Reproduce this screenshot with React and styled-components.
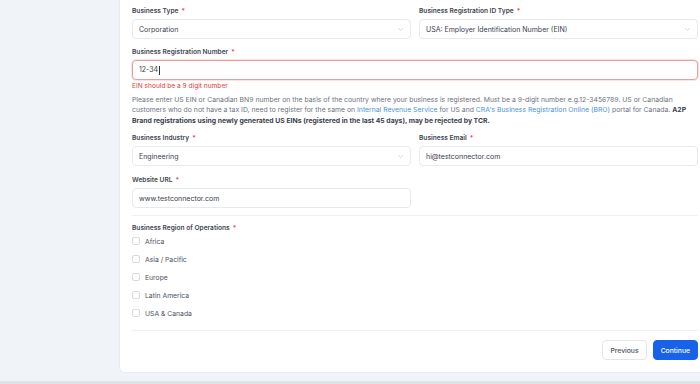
import React from 'react';
import styled, { createGlobalStyle } from 'styled-components';

const GlobalStyle = createGlobalStyle`
  html, body {
    margin: 0;
    padding: 0;
    background: #f0f4f8;
    overflow: hidden;
  }
  body {
    font-family: Inter, "Noto Sans", sans-serif;
    color: #374151;
  }
`;

const Page = styled.div`
  width: 700px;
  height: 384px;
  display: flex;
  flex-direction: column;
  overflow: hidden;
`;

const Card = styled.div`
  margin: -8px 0 0 119px;
  width: 566px;
  padding: 13px 12px 12px;
  background: #fff;
  border: 1px solid #e8ecf1;
  border-radius: 0 0 6px 6px;
  display: flex;
  flex-direction: column;
`;

const BottomLine = styled.div`
  margin-top: auto;
  height: 3px;
  background: #dfe2e7;
`;

const Row = styled.div`
  display: grid;
  grid-template-columns: 1fr 1fr;
  column-gap: 8px;
  margin-top: ${(p) => p.$top || 0}px;
`;

const Field = styled.div`
  display: flex;
  flex-direction: column;
  margin-top: ${(p) => p.$top || 0}px;
`;

const Label = styled.div`
  font-size: 6.6px;
  line-height: 10px;
  font-weight: 600;
  color: #3f4652;
  margin-bottom: ${(p) => (p.$tight ? 0 : 3)}px;
  span {
    color: #e5484d;
    margin-left: 3px;
  }
`;

const Box = styled.div`
  height: 20px;
  box-sizing: border-box;
  border: 1px solid ${(p) => (p.$error ? '#e9a09c' : '#e7e9ed')};
  box-shadow: ${(p) => (p.$error ? '0 0 0 1px #fbe3e2' : 'none')};
  border-radius: 4px;
  padding: 0 7px 0 6px;
  display: flex;
  align-items: center;
  justify-content: space-between;
  font-size: 7px;
  color: #3a404b;
  background: #fff;
`;

const Caret = styled.span`
  display: inline-block;
  width: 1px;
  height: 9px;
  background: #333;
  margin-left: 0.5px;
  vertical-align: middle;
`;

const ErrorText = styled.div`
  margin-top: 2px;
  font-size: 6.6px;
  line-height: 9px;
  color: #e0393b;
`;

const Help = styled.p`
  margin: 4px 0 0;
  font-size: 6.85px;
  line-height: 10.4px;
  white-space: nowrap;
  color: #6b7280;
  a {
    color: #4a94dc;
    text-decoration: none;
  }
  b {
    color: #3a404b;
    font-weight: 700;
  }
`;

const Divider = styled.hr`
  border: none;
  border-top: 1px solid #eef0f3;
  margin: ${(p) => p.$m || '8px 0'};
`;

const Checks = styled.div`
  display: flex;
  flex-direction: column;
  margin-top: -1px;
`;

const CheckRow = styled.div`
  height: 18px;
  display: flex;
  align-items: center;
  gap: 5px;
  font-size: 6.8px;
  color: #4b5260;
`;

const CheckBox = styled.span`
  width: 8px;
  height: 8px;
  box-sizing: border-box;
  border: 1px solid #d7dbe0;
  border-radius: 2px;
  background: #fff;
`;

const Actions = styled.div`
  display: flex;
  justify-content: flex-end;
  gap: 6px;
`;

const Button = styled.button`
  height: 20px;
  padding: 0 7px;
  border-radius: 4px;
  font-family: Inter, sans-serif;
  font-size: 6.8px;
  font-weight: 500;
  cursor: pointer;
  border: 1px solid ${(p) => (p.$primary ? '#1762e8' : '#e3e6ea')};
  background: ${(p) => (p.$primary ? '#1762e8' : '#fff')};
  color: ${(p) => (p.$primary ? '#fff' : '#4b5260')};
`;

const Chevron = () => (
  <svg width="5" height="3" viewBox="0 0 10 6" fill="none">
    <path d="M1 1l4 4 4-4" stroke="#c5c9d0" strokeWidth="1.5" strokeLinecap="round" />
  </svg>
);

const Select = ({ value }) => (
  <Box>
    {value}
    <Chevron />
  </Box>
);

const regions = ['Africa', 'Asia / Pacific', 'Europe', 'Latin America', 'USA & Canada'];

const App = () => (
  <Page>
    <GlobalStyle />
    <Card>
      <Row>
        <Field>
          <Label>Business Type<span>*</span></Label>
          <Select value="Corporation" />
        </Field>
        <Field>
          <Label>Business Registration ID Type<span>*</span></Label>
          <Select value="USA: Employer Identification Number (EIN)" />
        </Field>
      </Row>

      <Field $top={8}>
        <Label>Business Registration Number<span>*</span></Label>
        <Box $error>
          <div>12-34<Caret /></div>
        </Box>
        <ErrorText>EIN should be a 9 digit number</ErrorText>
      </Field>

      <Help>
        Please enter US EIN or Canadian BN9 number on the basis of the country where your business is
        registered. Must be a 9-digit number e.g.12-3456789. US or Canadian
        <br />
        customers who do not have a tax ID, need to register for the same on{' '}
        <a href="#irs">Internal Revenue Service</a> for US and{' '}
        <a href="#cra">CRA's Business Registration Online (BRO)</a> portal for Canada. <b>A2P</b>
        <br />
        <b>Brand registrations using newly generated US EINs (registered in the last 45 days), may be rejected by TCR.</b>
      </Help>

      <Row $top={7}>
        <Field>
          <Label>Business Industry<span>*</span></Label>
          <Select value="Engineering" />
        </Field>
        <Field>
          <Label>Business Email<span>*</span></Label>
          <Box>hi@testconnector.com</Box>
        </Field>
      </Row>

      <Row $top={9}>
        <Field>
          <Label>Website URL<span>*</span></Label>
          <Box>www.testconnector.com</Box>
        </Field>
      </Row>

      <Divider $m="7px 0 7px" />

      <Field>
        <Label $tight>Business Region of Operations<span>*</span></Label>
        <Checks>
          {regions.map((r) => (
            <CheckRow key={r}>
              <CheckBox />
              {r}
            </CheckRow>
          ))}
        </Checks>
      </Field>

      <Divider $m="8px 0 9px" />

      <Actions>
        <Button>Previous</Button>
        <Button $primary>Continue</Button>
      </Actions>
    </Card>
    <BottomLine />
  </Page>
);

export default App;
